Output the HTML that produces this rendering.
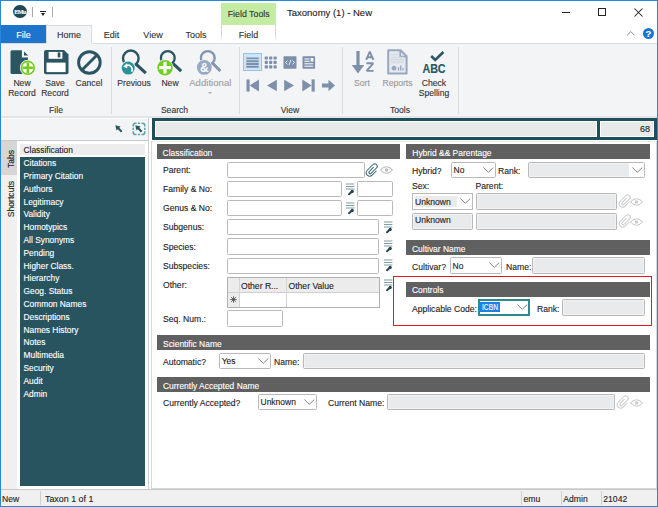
<!DOCTYPE html>
<html><head><meta charset="utf-8">
<style>
*{margin:0;padding:0;box-sizing:border-box}
html,body{width:658px;height:507px;overflow:hidden;background:#fff}
body{position:relative;font-family:"Liberation Sans",sans-serif;font-size:9px;color:#222}
.a{position:absolute}
.t{position:absolute;white-space:nowrap;line-height:1;-webkit-text-stroke:0.12px currentColor}
svg{overflow:visible}
</style></head><body>
<div class="a" style="left:13.4px;top:5.4px;width:13.2px;height:13px;border-radius:50%;background:#1f4a55"></div>
<div class="t" style="left:10.00px;width:20px;text-align:center;top:8.75px;font-size:6.2px;color:#fff;font-weight:bold;font-family:Liberation Serif,serif;letter-spacing:-0.7px">EMu</div>
<div class="a" style="left:32px;top:7px;width:1px;height:10px;background:#aaa"></div>
<div class="a" style="left:52px;top:7px;width:1px;height:10px;background:#aaa"></div>
<div class="a" style="left:40px;top:11px;width:6px;height:1px;background:#222"></div>
<div class="a" style="left:40.5px;top:12.6px;width:0;height:0;border-left:2.5px solid transparent;border-right:2.5px solid transparent;border-top:3px solid #222"></div>
<div class="a" style="left:221px;top:3px;width:55px;height:22px;background:#c3eba2"></div>
<div class="t" style="left:218.70px;width:60px;text-align:center;top:10.25px;font-size:8.8px;color:#333;font-weight:normal;">Field Tools</div>
<div class="t" style="left:287.00px;top:7.96px;font-size:9.5px;color:#222;font-weight:normal;">Taxonomy (1) - New</div>
<div class="a" style="left:562px;top:12px;width:8px;height:1px;background:#222"></div>
<div class="a" style="left:598px;top:8px;width:8px;height:8px;border:1px solid #222"></div>
<svg class="a" style="left:634px;top:8px" width="9" height="9" viewBox="0 0 9 9"><path d="M0.5 0.5L8.5 8.5M8.5 0.5L0.5 8.5" stroke="#222" stroke-width="1.05"/></svg>
<svg class="a" style="left:627px;top:31px" width="8" height="5" viewBox="0 0 8 5"><path d="M0.3 4L3.8 0.6L7.3 4" stroke="#888" stroke-width="1" fill="none"/></svg>
<div class="a" style="left:643px;top:28px;width:11px;height:11px;border-radius:50%;background:#1874cf"></div>
<div class="t" style="left:642.50px;width:12px;text-align:center;top:28.96px;font-size:9.5px;color:#fff;font-weight:bold;">?</div>
<div class="a" style="left:1px;top:25px;width:45px;height:18px;background:#1c74cc"></div>
<div class="t" style="left:1.00px;width:45px;text-align:center;top:30.88px;font-size:9px;color:#fff;font-weight:normal;">File</div>
<div class="a" style="left:46px;top:25px;width:46px;height:19px;background:#f3f4f6;border:1px solid #dadbdc;border-bottom:none"></div>
<div class="t" style="left:46.00px;width:46px;text-align:center;top:30.88px;font-size:9px;color:#333;font-weight:normal;">Home</div>
<div class="t" style="left:91.50px;width:40px;text-align:center;top:30.88px;font-size:9px;color:#333;font-weight:normal;">Edit</div>
<div class="t" style="left:133.00px;width:40px;text-align:center;top:30.88px;font-size:9px;color:#333;font-weight:normal;">View</div>
<div class="t" style="left:176.00px;width:40px;text-align:center;top:30.88px;font-size:9px;color:#333;font-weight:normal;">Tools</div>
<div class="a" style="left:221px;top:25px;width:1px;height:17px;background:linear-gradient(#d4d5d6,#d4d5d6 60%,rgba(212,213,214,0))"></div>
<div class="a" style="left:275px;top:25px;width:1px;height:17px;background:linear-gradient(#d4d5d6,#d4d5d6 60%,rgba(212,213,214,0))"></div>
<div class="t" style="left:221.00px;width:55px;text-align:center;top:30.88px;font-size:9px;color:#333;font-weight:normal;">Field</div>
<div class="a" style="left:1px;top:43px;width:656px;height:75px;background:#f3f4f6;border-top:1px solid #dadbdc;border-bottom:2px solid #e3e4e5"></div>
<div class="a" style="left:46px;top:43px;width:46px;height:1px;background:#f3f4f6"></div>
<div class="a" style="left:111px;top:47px;width:1px;height:67px;background:#dcdcdc"></div>
<div class="a" style="left:239px;top:47px;width:1px;height:67px;background:#dcdcdc"></div>
<div class="a" style="left:342px;top:47px;width:1px;height:67px;background:#dcdcdc"></div>
<div class="a" style="left:458px;top:47px;width:1px;height:67px;background:#dcdcdc"></div>
<div class="t" style="left:26.00px;width:60px;text-align:center;top:105.52px;font-size:8.6px;color:#333;font-weight:normal;">File</div>
<div class="t" style="left:144.50px;width:60px;text-align:center;top:105.52px;font-size:8.6px;color:#333;font-weight:normal;">Search</div>
<div class="t" style="left:260.00px;width:60px;text-align:center;top:105.52px;font-size:8.6px;color:#333;font-weight:normal;">View</div>
<div class="t" style="left:370.00px;width:60px;text-align:center;top:105.52px;font-size:8.6px;color:#333;font-weight:normal;">Tools</div>
<div class="t" style="left:2.00px;width:40px;text-align:center;top:79.12px;font-size:8.6px;color:#333;font-weight:normal;">New</div>
<div class="t" style="left:2.00px;width:40px;text-align:center;top:89.12px;font-size:8.6px;color:#333;font-weight:normal;">Record</div>
<div class="t" style="left:35.00px;width:40px;text-align:center;top:79.12px;font-size:8.6px;color:#333;font-weight:normal;">Save</div>
<div class="t" style="left:35.00px;width:40px;text-align:center;top:89.12px;font-size:8.6px;color:#333;font-weight:normal;">Record</div>
<div class="t" style="left:69.00px;width:40px;text-align:center;top:79.12px;font-size:8.6px;color:#333;font-weight:normal;">Cancel</div>
<div class="t" style="left:109.00px;width:50px;text-align:center;top:79.12px;font-size:8.6px;color:#333;font-weight:normal;">Previous</div>
<div class="t" style="left:150.00px;width:40px;text-align:center;top:79.12px;font-size:8.6px;color:#333;font-weight:normal;">New</div>
<div class="t" style="left:180.30px;width:60px;text-align:center;top:78.27px;font-size:9.6px;color:#a0a0a0;font-weight:normal;">Additional</div>
<div class="t" style="left:342.00px;width:40px;text-align:center;top:79.12px;font-size:8.6px;color:#999;font-weight:normal;">Sort</div>
<div class="t" style="left:372.50px;width:50px;text-align:center;top:79.12px;font-size:8.6px;color:#999;font-weight:normal;">Reports</div>
<div class="t" style="left:409.00px;width:50px;text-align:center;top:79.12px;font-size:8.6px;color:#333;font-weight:normal;">Check</div>
<div class="t" style="left:409.00px;width:50px;text-align:center;top:89.12px;font-size:8.6px;color:#333;font-weight:normal;">Spelling</div>
<svg class="a" style="left:10px;top:50px" width="26" height="26" viewBox="0 0 26 26"><path d="M2 0.3H11.9V7.5H18V22.5A1.5 1.5 0 0 1 16.5 24H2A1.5 1.5 0 0 1 0.5 22.5V1.8A1.5 1.5 0 0 1 2 0.3Z" fill="#2a5561"/><path d="M14 1.4V5.6H18.2Z" fill="#2a5561"/><circle cx="17.8" cy="17.8" r="8" fill="#f3f4f6"/><circle cx="17.8" cy="17.8" r="6.4" fill="#fff" stroke="#6fcf1e" stroke-width="1.6"/><path d="M17.8 12.4V23.2M12.4 17.8H23.2" stroke="#6fcf1e" stroke-width="2.5"/></svg>
<svg class="a" style="left:44px;top:50px" width="25" height="25" viewBox="0 0 25 25"><path d="M2 0H20L24.5 4.5V22.3A2 2 0 0 1 22.5 24.3H2A2 2 0 0 1 0 22.3V2A2 2 0 0 1 2 0Z" fill="#2a5561"/><rect x="4.6" y="1.9" width="13.8" height="6.9" fill="#fff"/><rect x="13.7" y="2.4" width="2.6" height="5" fill="#2a5561"/><rect x="2.5" y="12.6" width="19.1" height="9.5" fill="#fff"/></svg>
<svg class="a" style="left:77px;top:50px" width="25" height="25" viewBox="0 0 25 25"><circle cx="12.4" cy="12.5" r="10.8" fill="none" stroke="#2a5561" stroke-width="2.9"/><path d="M20 5L4.8 20.2" stroke="#2a5561" stroke-width="2.9"/></svg>
<svg class="a" style="left:118px;top:48px" width="30" height="28" viewBox="0 0 30 28"><circle cx="12.8" cy="10.3" r="7.8" fill="none" stroke="#2a5561" stroke-width="2.4"/><path d="M18.3 16.3L27.8 25.2" stroke="#2a5561" stroke-width="3.2"/><circle cx="10.2" cy="20.1" r="7.4" fill="#f3f4f6"/><circle cx="10.2" cy="20.1" r="6.5" fill="#2a9198"/><path d="M8.2 17.6A4.3 4.3 0 0 1 13.6 23.8" stroke="#fff" stroke-width="1.7" fill="none"/><path d="M5.2 18.4L9.2 15.3V20.6Z" fill="#fff"/></svg>
<svg class="a" style="left:156px;top:48px" width="30" height="28" viewBox="0 0 30 28"><circle cx="11.8" cy="10" r="6.9" fill="none" stroke="#2a5561" stroke-width="2.3"/><path d="M16.6 15.2L25.2 23.2" stroke="#2a5561" stroke-width="3"/><circle cx="9" cy="19.7" r="8.5" fill="#f3f4f6"/><circle cx="9" cy="19.7" r="7.7" fill="#6fcf1e"/><path d="M9 13.8V25.6M3.1 19.7H14.9" stroke="#fff" stroke-width="3.2"/></svg>
<svg class="a" style="left:195px;top:48px" width="30" height="28" viewBox="0 0 30 28"><circle cx="12.8" cy="10" r="6.9" fill="none" stroke="#8294b0" stroke-width="2.3"/><path d="M17.6 15.2L25.4 23" stroke="#8294b0" stroke-width="3"/><circle cx="9.3" cy="19.4" r="8" fill="#f3f4f6"/><circle cx="9.3" cy="19.4" r="7.4" fill="#98a9c3"/><text x="9.4" y="24" font-family="Liberation Sans" font-weight="bold" font-size="12" fill="#fff" text-anchor="middle">&amp;</text></svg>
<div class="a" style="left:208px;top:92px;width:0;height:0;border-left:2.5px solid transparent;border-right:2.5px solid transparent;border-top:2.5px solid #aaa"></div>
<div class="a" style="left:243px;top:53px;width:19px;height:18px;background:#cde5f8;border:1px solid #92c3ee"></div>
<svg class="a" style="left:246px;top:57px" width="14" height="11" viewBox="0 0 14 11"><path d="M0.3 1.4H12.7M0.3 4.2H12.7M0.3 7H12.7M0.3 9.8H12.7" stroke="#7d8fab" stroke-width="1.9"/></svg>
<svg class="a" style="left:264px;top:56px" width="14" height="13" viewBox="0 0 14 13"><rect x="0.7" y="0.4" width="3.2" height="3.2" rx="0.7" fill="#7d8fab"/><rect x="0.7" y="4.8" width="3.2" height="3.2" rx="0.7" fill="#7d8fab"/><rect x="0.7" y="9.2" width="3.2" height="3.2" rx="0.7" fill="#7d8fab"/><rect x="5.1" y="0.4" width="3.2" height="3.2" rx="0.7" fill="#7d8fab"/><rect x="5.1" y="4.8" width="3.2" height="3.2" rx="0.7" fill="#7d8fab"/><rect x="5.1" y="9.2" width="3.2" height="3.2" rx="0.7" fill="#7d8fab"/><rect x="9.5" y="0.4" width="3.2" height="3.2" rx="0.7" fill="#7d8fab"/><rect x="9.5" y="4.8" width="3.2" height="3.2" rx="0.7" fill="#7d8fab"/><rect x="9.5" y="9.2" width="3.2" height="3.2" rx="0.7" fill="#7d8fab"/></svg>
<svg class="a" style="left:283px;top:56px" width="14" height="13" viewBox="0 0 14 13"><rect x="0.5" y="0.3" width="13" height="12.4" rx="0.8" fill="#7d8fab"/><path d="M4.4 4.6L2.6 6.5L4.4 8.4M9.6 4.6L11.4 6.5L9.6 8.4M8 4L6 9" stroke="#fff" stroke-width="0.8" fill="none"/></svg>
<svg class="a" style="left:302px;top:56px" width="14" height="13" viewBox="0 0 14 13"><rect x="0.5" y="0.3" width="12.6" height="12.4" rx="0.8" fill="#7d8fab"/><path d="M2.4 3H7.5M2.4 5.3H7.5M2.4 7.8H11.2M2.4 10.2H11.2" stroke="#fff" stroke-width="1"/><rect x="8.6" y="2" width="2.8" height="3.5" fill="#fff"/></svg>
<svg class="a" style="left:246px;top:79px" width="90" height="13" viewBox="0 0 90 13"><rect x="0.5" y="0.4" width="3.1" height="12.2" fill="#7d8fab"/><path d="M3.6 6.5L13 0.4V12.6Z" fill="#7d8fab"/><path d="M21 6.5L30.8 0.8V12.2Z" fill="#7d8fab"/><path d="M48 6.5L38.2 0.8V12.2Z" fill="#7d8fab"/><path d="M65.6 6.5L56.3 0.4V12.6Z" fill="#7d8fab"/><rect x="65.6" y="0.4" width="3.1" height="12.2" fill="#7d8fab"/><path d="M76 4.5H82.5V0.8L89 6.5L82.5 12.2V8.5H76Z" fill="#7d8fab"/></svg>
<svg class="a" style="left:351px;top:50px" width="25" height="25" viewBox="0 0 25 25"><path d="M7 1V17" stroke="#7d8fab" stroke-width="3.2"/><path d="M0.8 15H13.2L7 23.5Z" fill="#7d8fab"/><path d="M15.2 9.8L18.8 1.6L22.4 9.8M16.4 7.2H21.2" stroke="#7d8fab" stroke-width="1.9" fill="none" stroke-linejoin="bevel"/><path d="M15.4 13.3H22.2L15.6 20.9H22.6" stroke="#7d8fab" stroke-width="1.9" fill="none" stroke-linejoin="bevel"/></svg>
<svg class="a" style="left:387px;top:49px" width="22" height="27" viewBox="0 0 22 27"><path d="M1.2 1.2H13.6L19.6 7.2V24.6H1.2Z" fill="#e6e9ef" stroke="#98a7bf" stroke-width="2" stroke-linejoin="round"/><path d="M13.2 1.5V7.6H19.3" fill="none" stroke="#98a7bf" stroke-width="1.6"/><path d="M3.8 5.4H11.5M3.8 8.4H16.8M3.8 10.8H16.8M3.8 13.2H16.8" stroke="#d2d9e4" stroke-width="1.5"/><circle cx="7" cy="19.2" r="2.4" fill="#98a7bf"/><path d="M11.5 21.5V18.3M13.7 21.5V16.5M15.9 21.5V19" stroke="#98a7bf" stroke-width="1.3"/></svg>
<svg class="a" style="left:429.5px;top:50.5px" width="16" height="11" viewBox="0 0 16 11"><path d="M1.2 5L5.2 9L13.4 1" stroke="#2a5561" stroke-width="2.5" fill="none"/></svg>
<div class="t" style="left:414.20px;width:40px;text-align:center;top:62.57px;font-size:12.2px;color:#2a5561;font-weight:bold;transform:scaleX(0.88)">ABC</div>
<div class="a" style="left:1px;top:118px;width:148px;height:23px;background:#f3f4f6;border-top:1px solid #fff;border-right:1px solid #c8c8c8;border-bottom:1px solid #c8c8c8"></div>
<div class="a" style="left:149px;top:118px;width:508px;height:23px;background:#fff"></div>
<div class="a" style="left:152px;top:118px;width:505px;height:22px;background:#1f4f5b"></div>
<div class="a" style="left:154.5px;top:120.5px;width:442.8px;height:16.7px;background:#e8e9e9;border:1px solid #fff"></div>
<div class="a" style="left:599.8px;top:120.5px;width:54px;height:16.7px;background:#e8e9e9;border:1px solid #fff"></div>
<div class="t" style="left:610.00px;width:40px;text-align:right;top:125.38px;font-size:9px;color:#222;font-weight:normal;">68</div>
<svg class="a" style="left:114.5px;top:124.8px" width="9" height="9" viewBox="0 0 9 9"><path d="M0.3 0.3L5.6 1.5L1.5 5.6Z" fill="#2a5561"/><path d="M2.8 2.8L6.7 6.7" stroke="#2a5561" stroke-width="2.1"/></svg>
<svg class="a" style="left:131.5px;top:121.7px" width="14" height="14" viewBox="0 0 14 14"><path d="M1.2 4.5V3.5999999999999996A2.4 2.4 0 0 1 3.5999999999999996 1.2H4.5M9.5 1.2H10.4A2.4 2.4 0 0 1 12.8 3.5999999999999996V4.5M12.8 9.299999999999999V10.2A2.4 2.4 0 0 1 10.4 12.6H9.5M4.5 12.6H3.5999999999999996A2.4 2.4 0 0 1 1.2 10.2V9.299999999999999M5.9 1.2H8.1M5.9 12.6H8.1M1.2 5.8V8M12.8 5.8V8" fill="none" stroke="#5aa3a8" stroke-width="1.5"/></svg>
<svg class="a" style="left:135px;top:124.8px" width="9" height="9" viewBox="0 0 9 9"><path d="M0.3 0.3L5.6 1.5L1.5 5.6Z" fill="#2a5561"/><path d="M2.8 2.8L6.7 6.7" stroke="#2a5561" stroke-width="2.1"/></svg>
<div class="a" style="left:1px;top:141px;width:16px;height:348px;background:#f0f0f0"></div>
<div class="a" style="left:1px;top:141px;width:16px;height:34px;background:#d6d6d6"></div>
<div class="t" style="left:-7.50px;width:40px;text-align:center;top:153.22px;font-size:8.6px;color:#222;font-weight:normal;transform:rotate(-90deg);transform-origin:50% 70%">Tabs</div>
<div class="t" style="left:-17.50px;width:60px;text-align:center;top:192.72px;font-size:8.6px;color:#222;font-weight:normal;transform:rotate(-90deg);transform-origin:50% 70%">Shortcuts</div>
<div class="a" style="left:17px;top:141px;width:132px;height:348px;background:#fff;border-right:1px solid #d0d0d0"></div>
<div class="a" style="left:20px;top:144.2px;width:125.4px;height:10.6px;background:#ededed"></div>
<div class="a" style="left:20px;top:156.8px;width:125.4px;height:329.2px;background:#285460"></div>
<div class="t" style="left:23.50px;top:146.39px;font-size:8.4px;color:#222;font-weight:normal;">Classification</div>
<div class="t" style="left:23.50px;top:159.19px;font-size:8.4px;color:#fff;font-weight:normal;">Citations</div>
<div class="t" style="left:23.50px;top:171.99px;font-size:8.4px;color:#fff;font-weight:normal;">Primary Citation</div>
<div class="t" style="left:23.50px;top:184.79px;font-size:8.4px;color:#fff;font-weight:normal;">Authors</div>
<div class="t" style="left:23.50px;top:197.59px;font-size:8.4px;color:#fff;font-weight:normal;">Legitimacy</div>
<div class="t" style="left:23.50px;top:210.39px;font-size:8.4px;color:#fff;font-weight:normal;">Validity</div>
<div class="t" style="left:23.50px;top:223.19px;font-size:8.4px;color:#fff;font-weight:normal;">Homotypics</div>
<div class="t" style="left:23.50px;top:235.99px;font-size:8.4px;color:#fff;font-weight:normal;">All Synonyms</div>
<div class="t" style="left:23.50px;top:248.79px;font-size:8.4px;color:#fff;font-weight:normal;">Pending</div>
<div class="t" style="left:23.50px;top:261.59px;font-size:8.4px;color:#fff;font-weight:normal;">Higher Class.</div>
<div class="t" style="left:23.50px;top:274.39px;font-size:8.4px;color:#fff;font-weight:normal;">Hierarchy</div>
<div class="t" style="left:23.50px;top:287.19px;font-size:8.4px;color:#fff;font-weight:normal;">Geog. Status</div>
<div class="t" style="left:23.50px;top:299.99px;font-size:8.4px;color:#fff;font-weight:normal;">Common Names</div>
<div class="t" style="left:23.50px;top:312.79px;font-size:8.4px;color:#fff;font-weight:normal;">Descriptions</div>
<div class="t" style="left:23.50px;top:325.59px;font-size:8.4px;color:#fff;font-weight:normal;">Names History</div>
<div class="t" style="left:23.50px;top:338.39px;font-size:8.4px;color:#fff;font-weight:normal;">Notes</div>
<div class="t" style="left:23.50px;top:351.19px;font-size:8.4px;color:#fff;font-weight:normal;">Multimedia</div>
<div class="t" style="left:23.50px;top:363.99px;font-size:8.4px;color:#fff;font-weight:normal;">Security</div>
<div class="t" style="left:23.50px;top:376.79px;font-size:8.4px;color:#fff;font-weight:normal;">Audit</div>
<div class="t" style="left:23.50px;top:389.59px;font-size:8.4px;color:#fff;font-weight:normal;">Admin</div>
<div class="a" style="left:151px;top:141px;width:506px;height:348px;background:#fff;border:1px solid #d8d8d8;border-top:none"></div>
<div class="a" style="left:152px;top:141px;width:504px;height:1px;background:#ededed"></div>
<div class="a" style="left:156.6px;top:144.2px;width:243.4px;height:14.6px;background:#5f605f"></div>
<div class="t" style="left:162.60px;top:148.55px;font-size:8.45px;color:#fff;font-weight:normal;">Classification</div>
<div class="a" style="left:406.3px;top:144.2px;width:243.7px;height:14.6px;background:#5f605f"></div>
<div class="t" style="left:412.30px;top:148.55px;font-size:8.45px;color:#fff;font-weight:normal;">Hybrid &amp;&amp; Parentage</div>
<div class="t" style="left:163.00px;top:165.72px;font-size:8.6px;color:#222;font-weight:normal;">Parent:</div>
<div class="a" style="left:227.3px;top:161.5px;width:137.3px;height:16.4px;background:#fff;border:1px solid #b9b9b9;border-radius:1.5px"></div>
<svg class="a" style="left:364px;top:162px" width="16" height="16" viewBox="0 0 16 16"><g transform="translate(8,8) rotate(45) scale(0.88) translate(-4.5,-8.5)"><path d="M3.5 5V12A1.5 1.5 0 0 0 6.5 12V3.3A2.8 2.8 0 0 0 0.9 3.3V12.5A3.9 3.9 0 0 0 8.7 12.5V5.5" stroke="#2e6570" stroke-width="1.1" fill="none"/></g></svg>
<svg class="a" style="left:380px;top:166px" width="13" height="8" viewBox="0 0 13 8"><path d="M0.5 4Q6.5 -2.5 12.5 4Q6.5 10.5 0.5 4Z" stroke="#bbb" stroke-width="1.1" fill="none"/><circle cx="6.5" cy="4" r="1.7" fill="#bbb"/></svg>
<div class="t" style="left:163.00px;top:184.72px;font-size:8.6px;color:#222;font-weight:normal;">Family &amp; No:</div>
<div class="a" style="left:227.3px;top:180.8px;width:114.6px;height:16.4px;background:#fff;border:1px solid #b9b9b9;border-radius:1.5px"></div>
<svg class="a" style="left:346px;top:183px" width="10" height="13" viewBox="0 0 10 13"><path d="M0 1H8.4M0 3.5H8.4M0 6H8.4" stroke="#7e9ca2" stroke-width="1.1"/><path d="M3 11.2L6 8.6" stroke="#1f4550" stroke-width="2" stroke-linecap="round"/><circle cx="6.2" cy="8.4" r="1.6" fill="#1f4550"/></svg>
<div class="a" style="left:357px;top:181px;width:36px;height:16px;background:#fff;border:1px solid #b9b9b9;border-radius:1.5px"></div>
<div class="t" style="left:163.00px;top:203.72px;font-size:8.6px;color:#222;font-weight:normal;">Genus &amp; No:</div>
<div class="a" style="left:227.3px;top:199.8px;width:114.6px;height:16.4px;background:#fff;border:1px solid #b9b9b9;border-radius:1.5px"></div>
<svg class="a" style="left:346px;top:202px" width="10" height="13" viewBox="0 0 10 13"><path d="M0 1H8.4M0 3.5H8.4M0 6H8.4" stroke="#7e9ca2" stroke-width="1.1"/><path d="M3 11.2L6 8.6" stroke="#1f4550" stroke-width="2" stroke-linecap="round"/><circle cx="6.2" cy="8.4" r="1.6" fill="#1f4550"/></svg>
<div class="a" style="left:357px;top:200px;width:36px;height:16px;background:#fff;border:1px solid #b9b9b9;border-radius:1.5px"></div>
<div class="t" style="left:163.00px;top:222.72px;font-size:8.6px;color:#222;font-weight:normal;">Subgenus:</div>
<div class="a" style="left:227.3px;top:219.3px;width:152px;height:16.2px;background:#fff;border:1px solid #b9b9b9;border-radius:1.5px"></div>
<svg class="a" style="left:384px;top:221px" width="10" height="13" viewBox="0 0 10 13"><path d="M0 1H8.4M0 3.5H8.4M0 6H8.4" stroke="#7e9ca2" stroke-width="1.1"/><path d="M3 11.2L6 8.6" stroke="#1f4550" stroke-width="2" stroke-linecap="round"/><circle cx="6.2" cy="8.4" r="1.6" fill="#1f4550"/></svg>
<div class="t" style="left:163.00px;top:242.72px;font-size:8.6px;color:#222;font-weight:normal;">Species:</div>
<div class="a" style="left:227.3px;top:238.2px;width:152px;height:16.4px;background:#fff;border:1px solid #b9b9b9;border-radius:1.5px"></div>
<svg class="a" style="left:384px;top:240px" width="10" height="13" viewBox="0 0 10 13"><path d="M0 1H8.4M0 3.5H8.4M0 6H8.4" stroke="#7e9ca2" stroke-width="1.1"/><path d="M3 11.2L6 8.6" stroke="#1f4550" stroke-width="2" stroke-linecap="round"/><circle cx="6.2" cy="8.4" r="1.6" fill="#1f4550"/></svg>
<div class="t" style="left:163.00px;top:261.72px;font-size:8.6px;color:#222;font-weight:normal;">Subspecies:</div>
<div class="a" style="left:227.3px;top:257.6px;width:152px;height:16px;background:#fff;border:1px solid #b9b9b9;border-radius:1.5px"></div>
<svg class="a" style="left:384px;top:259px" width="10" height="13" viewBox="0 0 10 13"><path d="M0 1H8.4M0 3.5H8.4M0 6H8.4" stroke="#7e9ca2" stroke-width="1.1"/><path d="M3 11.2L6 8.6" stroke="#1f4550" stroke-width="2" stroke-linecap="round"/><circle cx="6.2" cy="8.4" r="1.6" fill="#1f4550"/></svg>
<div class="t" style="left:163.00px;top:280.72px;font-size:8.6px;color:#222;font-weight:normal;">Other:</div>
<div class="a" style="left:227px;top:277px;width:153px;height:30.5px;background:#fff;border:1px solid #b0b0b0"></div>
<div class="a" style="left:228px;top:278px;width:151px;height:14.5px;background:#ececec;border-bottom:1px solid #d0d0d0"></div>
<div class="a" style="left:228px;top:292.5px;width:11.5px;height:14px;background:#ececec"></div>
<div class="a" style="left:239px;top:278px;width:1px;height:28.5px;background:#d4d4d4"></div>
<div class="a" style="left:286px;top:278px;width:1px;height:28.5px;background:#d4d4d4"></div>
<div class="t" style="left:241.00px;top:281.72px;font-size:8.6px;color:#222;font-weight:normal;">Other R...</div>
<div class="t" style="left:288.50px;top:281.72px;font-size:8.6px;color:#222;font-weight:normal;">Other Value</div>
<svg class="a" style="left:230px;top:296px" width="7" height="7" viewBox="0 0 7 7"><path d="M3.5 0.3V6.7M0.3 3.5H6.7M1.2 1.2L5.8 5.8M5.8 1.2L1.2 5.8" stroke="#555" stroke-width="0.9"/></svg>
<svg class="a" style="left:384px;top:279px" width="10" height="13" viewBox="0 0 10 13"><path d="M0 1H8.4M0 3.5H8.4M0 6H8.4" stroke="#7e9ca2" stroke-width="1.1"/><path d="M3 11.2L6 8.6" stroke="#1f4550" stroke-width="2" stroke-linecap="round"/><circle cx="6.2" cy="8.4" r="1.6" fill="#1f4550"/></svg>
<div class="t" style="left:163.00px;top:314.72px;font-size:8.6px;color:#222;font-weight:normal;">Seq. Num.:</div>
<div class="a" style="left:227px;top:310.2px;width:56px;height:16.4px;background:#fff;border:1px solid #b9b9b9;border-radius:1.5px"></div>
<div class="t" style="left:412.00px;top:166.72px;font-size:8.6px;color:#222;font-weight:normal;">Hybrid?</div>
<div class="a" style="left:451px;top:162px;width:45px;height:16px;background:#fff;border:1px solid #b9b9b9;border-radius:1.5px"></div>
<div class="t" style="left:453.50px;top:165.60px;font-size:8.5px;color:#222;font-weight:normal;">No</div>
<svg class="a" style="left:483px;top:167px" width="11" height="6" viewBox="0 0 11 6"><path d="M0.3 0.5L5.3 5.3L10.3 0.5" stroke="#777" stroke-width="0.9" fill="none"/></svg>
<div class="t" style="left:498.00px;top:166.72px;font-size:8.6px;color:#222;font-weight:normal;">Rank:</div>
<div class="a" style="left:528px;top:162px;width:117px;height:16px;background:#e9eaeb;border:1px solid #b8b8b8;border-radius:1.5px;box-shadow:inset 0 0 0 1px #f2f2f2"></div>
<div class="a" style="left:629px;top:163px;width:15px;height:14px;background:#fff"></div>
<svg class="a" style="left:632px;top:167px" width="11" height="6" viewBox="0 0 11 6"><path d="M0.3 0.5L5.3 5.3L10.3 0.5" stroke="#777" stroke-width="0.9" fill="none"/></svg>
<div class="t" style="left:412.00px;top:181.72px;font-size:8.6px;color:#222;font-weight:normal;">Sex:</div>
<div class="t" style="left:475.50px;top:181.72px;font-size:8.6px;color:#222;font-weight:normal;">Parent:</div>
<div class="a" style="left:412px;top:193px;width:61px;height:17px;background:#fff;border:1px solid #b9b9b9"></div>
<div class="a" style="left:414.5px;top:195.8px;width:42.8px;height:11.6px;background:#e9eaea"></div>
<div class="t" style="left:415.00px;top:198.22px;font-size:8.6px;color:#222;font-weight:normal;">Unknown</div>
<svg class="a" style="left:460px;top:198px" width="11" height="6" viewBox="0 0 11 6"><path d="M0.3 0.5L5.3 5.3L10.3 0.5" stroke="#777" stroke-width="0.9" fill="none"/></svg>
<div class="a" style="left:476px;top:193px;width:141px;height:17px;background:#e9eaeb;border:1px solid #b8b8b8;border-radius:1.5px;box-shadow:inset 0 0 0 1px #f2f2f2"></div>
<svg class="a" style="left:617px;top:193px" width="16" height="16" viewBox="0 0 16 16"><g transform="translate(8,8) rotate(45) scale(0.88) translate(-4.5,-8.5)"><path d="M3.5 5V12A1.5 1.5 0 0 0 6.5 12V3.3A2.8 2.8 0 0 0 0.9 3.3V12.5A3.9 3.9 0 0 0 8.7 12.5V5.5" stroke="#c8c8c8" stroke-width="1.1" fill="none"/></g></svg>
<svg class="a" style="left:630px;top:198px" width="13" height="8" viewBox="0 0 13 8"><path d="M0.5 4Q6.5 -2.5 12.5 4Q6.5 10.5 0.5 4Z" stroke="#ccc" stroke-width="1.1" fill="none"/><circle cx="6.5" cy="4" r="1.7" fill="#ccc"/></svg>
<div class="a" style="left:412px;top:212.6px;width:61px;height:17px;background:#e9eaeb;border:1px solid #b8b8b8;border-radius:1.5px;box-shadow:inset 0 0 0 1px #f2f2f2"></div>
<div class="t" style="left:415.00px;top:216.32px;font-size:8.6px;color:#222;font-weight:normal;">Unknown</div>
<div class="a" style="left:476px;top:212.6px;width:141px;height:17px;background:#e9eaeb;border:1px solid #b8b8b8;border-radius:1.5px;box-shadow:inset 0 0 0 1px #f2f2f2"></div>
<svg class="a" style="left:617px;top:213px" width="16" height="16" viewBox="0 0 16 16"><g transform="translate(8,8) rotate(45) scale(0.88) translate(-4.5,-8.5)"><path d="M3.5 5V12A1.5 1.5 0 0 0 6.5 12V3.3A2.8 2.8 0 0 0 0.9 3.3V12.5A3.9 3.9 0 0 0 8.7 12.5V5.5" stroke="#c8c8c8" stroke-width="1.1" fill="none"/></g></svg>
<svg class="a" style="left:630px;top:218px" width="13" height="8" viewBox="0 0 13 8"><path d="M0.5 4Q6.5 -2.5 12.5 4Q6.5 10.5 0.5 4Z" stroke="#ccc" stroke-width="1.1" fill="none"/><circle cx="6.5" cy="4" r="1.7" fill="#ccc"/></svg>
<div class="a" style="left:406px;top:240px;width:244px;height:15px;background:#5f605f"></div>
<div class="t" style="left:412.00px;top:244.75px;font-size:8.45px;color:#fff;font-weight:normal;">Cultivar Name</div>
<div class="t" style="left:412.00px;top:262.72px;font-size:8.6px;color:#222;font-weight:normal;">Cultivar?</div>
<div class="a" style="left:450px;top:257px;width:52px;height:17px;background:#fff;border:1px solid #b9b9b9;border-radius:1.5px"></div>
<div class="t" style="left:452.50px;top:261.60px;font-size:8.5px;color:#222;font-weight:normal;">No</div>
<svg class="a" style="left:489px;top:262px" width="11" height="6" viewBox="0 0 11 6"><path d="M0.3 0.5L5.3 5.3L10.3 0.5" stroke="#777" stroke-width="0.9" fill="none"/></svg>
<div class="t" style="left:506.00px;top:262.72px;font-size:8.6px;color:#222;font-weight:normal;">Name:</div>
<div class="a" style="left:532px;top:257px;width:113px;height:17px;background:#e9eaeb;border:1px solid #b8b8b8;border-radius:1.5px;box-shadow:inset 0 0 0 1px #f2f2f2"></div>
<div class="a" style="left:393px;top:276px;width:259px;height:50px;border:1px solid #e8161f"></div>
<div class="a" style="left:406px;top:281.6px;width:244px;height:15.1px;background:#5f605f"></div>
<div class="t" style="left:412.00px;top:286.45px;font-size:8.45px;color:#fff;font-weight:normal;">Controls</div>
<div class="t" style="left:412.00px;top:304.72px;font-size:8.6px;color:#222;font-weight:normal;">Applicable Code:</div>
<div class="a" style="left:478px;top:299px;width:52px;height:17px;background:#fff;border:2px solid #2a8a8f"></div>
<div class="a" style="left:480px;top:302px;width:20px;height:10px;background:#1e7fe6"></div>
<div class="t" style="left:475.00px;width:30px;text-align:center;top:303.22px;font-size:8.6px;color:#fff;font-weight:normal;transform:scaleX(0.78)">ICBN</div>
<svg class="a" style="left:517px;top:304px" width="11" height="6" viewBox="0 0 11 6"><path d="M0.3 0.5L5.3 5.3L10.3 0.5" stroke="#777" stroke-width="0.9" fill="none"/></svg>
<div class="t" style="left:537.00px;top:304.72px;font-size:8.6px;color:#222;font-weight:normal;">Rank:</div>
<div class="a" style="left:562px;top:299px;width:83px;height:17px;background:#e9eaeb;border:1px solid #b8b8b8;border-radius:1.5px;box-shadow:inset 0 0 0 1px #f2f2f2"></div>
<div class="a" style="left:157px;top:335px;width:493px;height:15px;background:#5f605f"></div>
<div class="t" style="left:163.00px;top:339.75px;font-size:8.45px;color:#fff;font-weight:normal;">Scientific Name</div>
<div class="t" style="left:163.00px;top:357.72px;font-size:8.6px;color:#222;font-weight:normal;">Automatic?</div>
<div class="a" style="left:219.2px;top:352.8px;width:51.4px;height:16.4px;background:#fff;border:1px solid #b9b9b9;border-radius:1.5px"></div>
<div class="t" style="left:221.70px;top:356.80px;font-size:8.5px;color:#222;font-weight:normal;">Yes</div>
<svg class="a" style="left:257.6px;top:358px" width="11" height="6" viewBox="0 0 11 6"><path d="M0.3 0.5L5.3 5.3L10.3 0.5" stroke="#777" stroke-width="0.9" fill="none"/></svg>
<div class="t" style="left:274.00px;top:357.72px;font-size:8.6px;color:#222;font-weight:normal;">Name:</div>
<div class="a" style="left:302.5px;top:353.2px;width:342px;height:16px;background:#e9eaeb;border:1px solid #b8b8b8;border-radius:1.5px;box-shadow:inset 0 0 0 1px #f2f2f2"></div>
<div class="a" style="left:157px;top:377px;width:493px;height:15px;background:#5f605f"></div>
<div class="t" style="left:163.00px;top:381.75px;font-size:8.45px;color:#fff;font-weight:normal;">Currently Accepted Name</div>
<div class="t" style="left:163.00px;top:398.72px;font-size:8.6px;color:#222;font-weight:normal;">Currently Accepted?</div>
<div class="a" style="left:258px;top:394px;width:59px;height:16px;background:#fff;border:1px solid #b9b9b9;border-radius:1.5px"></div>
<div class="t" style="left:260.50px;top:397.60px;font-size:8.5px;color:#222;font-weight:normal;">Unknown</div>
<svg class="a" style="left:304px;top:399px" width="11" height="6" viewBox="0 0 11 6"><path d="M0.3 0.5L5.3 5.3L10.3 0.5" stroke="#777" stroke-width="0.9" fill="none"/></svg>
<div class="t" style="left:328.00px;top:398.72px;font-size:8.6px;color:#222;font-weight:normal;">Current Name:</div>
<div class="a" style="left:387px;top:394px;width:228px;height:16px;background:#e9eaeb;border:1px solid #b8b8b8;border-radius:1.5px;box-shadow:inset 0 0 0 1px #f2f2f2"></div>
<svg class="a" style="left:615px;top:394px" width="16" height="16" viewBox="0 0 16 16"><g transform="translate(8,8) rotate(45) scale(0.88) translate(-4.5,-8.5)"><path d="M3.5 5V12A1.5 1.5 0 0 0 6.5 12V3.3A2.8 2.8 0 0 0 0.9 3.3V12.5A3.9 3.9 0 0 0 8.7 12.5V5.5" stroke="#c8c8c8" stroke-width="1.1" fill="none"/></g></svg>
<svg class="a" style="left:630px;top:399px" width="13" height="8" viewBox="0 0 13 8"><path d="M0.5 4Q6.5 -2.5 12.5 4Q6.5 10.5 0.5 4Z" stroke="#ccc" stroke-width="1.1" fill="none"/><circle cx="6.5" cy="4" r="1.7" fill="#ccc"/></svg>
<div class="a" style="left:1px;top:489px;width:656px;height:17px;background:#f0f0f0;border-top:1px solid #c8c8c8"></div>
<div class="t" style="left:2.00px;top:495.02px;font-size:8.6px;color:#222;font-weight:normal;">New</div>
<div class="a" style="left:40px;top:491px;width:1px;height:14px;background:#d0d0d0"></div>
<div class="t" style="left:45.00px;top:494.77px;font-size:8.9px;color:#222;font-weight:normal;">Taxon 1 of 1</div>
<div class="a" style="left:521px;top:491px;width:1px;height:14px;background:#d0d0d0"></div>
<div class="a" style="left:561px;top:491px;width:1px;height:14px;background:#d0d0d0"></div>
<div class="a" style="left:601px;top:491px;width:1px;height:14px;background:#d0d0d0"></div>
<div class="t" style="left:523.50px;top:495.02px;font-size:8.6px;color:#222;font-weight:normal;">emu</div>
<div class="t" style="left:563.30px;top:495.02px;font-size:8.6px;color:#222;font-weight:normal;">Admin</div>
<div class="t" style="left:603.30px;top:495.02px;font-size:8.6px;color:#222;font-weight:normal;">21042</div>
<div class="a" style="left:0;top:0;width:658px;height:507px;border:1px solid #2589d8;z-index:50"></div>
</body></html>
